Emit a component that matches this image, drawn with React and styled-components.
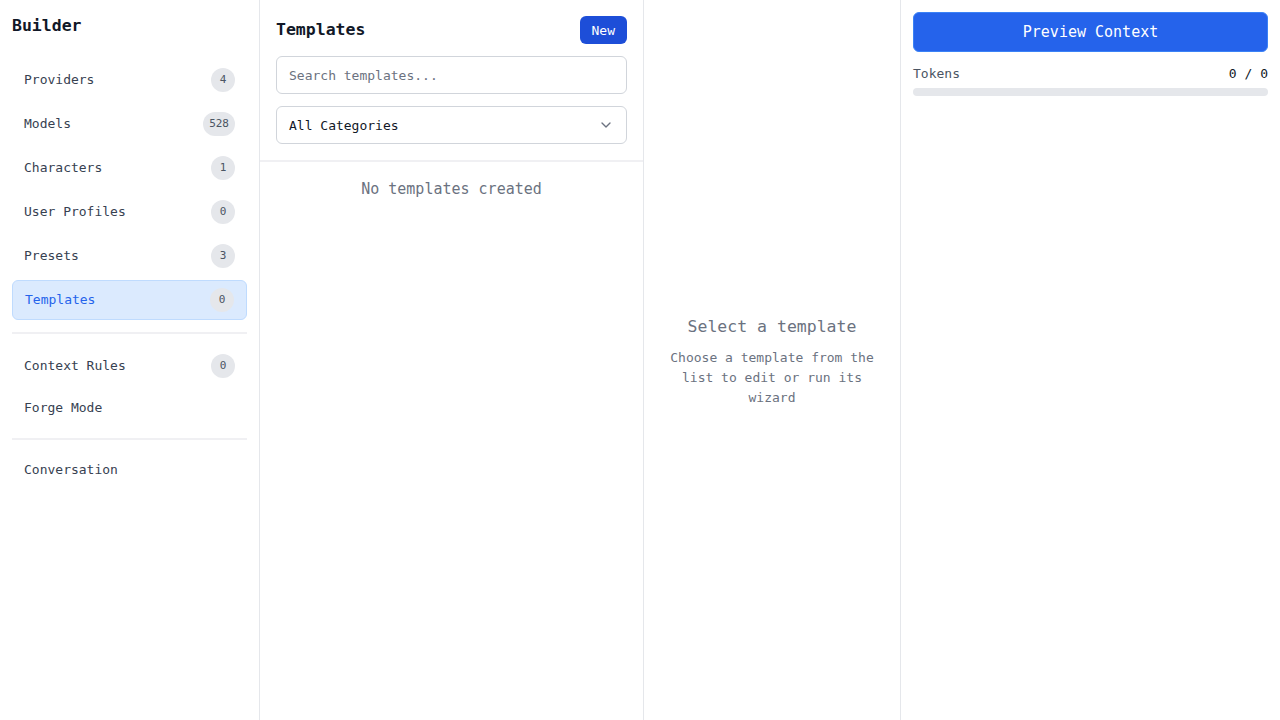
import React from "react";
import styled, { createGlobalStyle } from "styled-components";
import { ChevronDown } from "lucide-react";

const Global = createGlobalStyle`
  html, body { margin: 0; padding: 0; background: #fff; }
  body { font-family: "DejaVu Sans Mono", "Liberation Mono", monospace; color: #111827; }
  * { box-sizing: border-box; }
`;

const Layout = styled.div`
  display: flex;
  width: 1280px;
  height: 720px;
  overflow: hidden;
`;

const Sidebar = styled.aside`
  width: 260px;
  flex-shrink: 0;
  border-right: 1px solid #e5e7eb;
  padding: 12px;
  display: flex;
  flex-direction: column;
`;

const Brand = styled.h1`
  margin: 0 0 22px 0;
  padding-top: 2px;
  font-size: 16.5px;
  line-height: 24px;
  font-weight: 700;
  color: #111827;
`;

const NavList = styled.nav`
  display: flex;
  flex-direction: column;
  gap: 4px;
`;

const NavItem = styled.div`
  display: flex;
  align-items: center;
  justify-content: space-between;
  padding: 7px ${(p) => (p.$active ? "12px" : "11px")};
  border-radius: 6px;
  font-size: 13px;
  line-height: 20px;
  color: ${(p) => (p.$active ? "#2563eb" : "#374151")};
  background: ${(p) => (p.$active ? "#dbeafe" : "transparent")};
  border: 1px solid ${(p) => (p.$active ? "#bfdbfe" : "transparent")};
`;

const Badge = styled.span`
  min-width: 24px;
  height: 24px;
  padding: 0 6px;
  border-radius: 12px;
  background: #e5e7eb;
  color: #4b5563;
  font-size: 11px;
  display: inline-flex;
  align-items: center;
  justify-content: center;
`;

const Divider = styled.div`
  height: 2px;
  background: #f0f0f3;
  margin: 12px 0;
`;

const ListPanel = styled.section`
  width: 384px;
  flex-shrink: 0;
  border-right: 1px solid #e5e7eb;
  display: flex;
  flex-direction: column;
`;

const ListHeader = styled.div`
  padding: 16px;
  border-bottom: 2px solid #f0f0f3;
  display: flex;
  flex-direction: column;
  gap: 12px;
`;

const HeaderRow = styled.div`
  display: flex;
  align-items: center;
  justify-content: space-between;
  height: 28px;
`;

const PanelTitle = styled.h2`
  margin: 0 0 2px 0;
  font-size: 16.5px;
  font-weight: 700;
  color: #111827;
`;

const SmallButton = styled.button`
  height: 28px;
  padding: 0 12px;
  border: none;
  border-radius: 6px;
  background: #1d4ed8;
  color: #fff;
  font-family: inherit;
  font-size: 13px;
`;

const SearchInput = styled.input`
  height: 38px;
  width: 100%;
  border: 1px solid #d1d5db;
  border-radius: 6px;
  padding: 0 12px;
  font-family: inherit;
  font-size: 13px;
  color: #111827;
  outline: none;
  &::placeholder { color: #6b7280; }
`;

const SelectBox = styled.div`
  height: 38px;
  border: 1px solid #d1d5db;
  border-radius: 6px;
  padding: 0 12px;
  display: flex;
  align-items: center;
  justify-content: space-between;
  font-size: 13px;
  color: #111827;
`;

const EmptyList = styled.div`
  padding: 16px;
  text-align: center;
  font-size: 15px;
  line-height: 22px;
  color: #6b7280;
`;

const DetailPanel = styled.section`
  width: 257px;
  flex-shrink: 0;
  border-right: 1px solid #e5e7eb;
  display: flex;
  flex-direction: column;
  align-items: center;
  justify-content: center;
  padding: 27px 24px 24px;
  text-align: center;
`;

const DetailTitle = styled.div`
  font-size: 16.5px;
  line-height: 22px;
  color: #6b7280;
  margin-bottom: 10px;
`;

const DetailText = styled.p`
  margin: 0;
  font-size: 13px;
  line-height: 20px;
  color: #6b7280;
`;

const ContextPanel = styled.section`
  flex: 1;
  padding: 12px;
  display: flex;
  flex-direction: column;
`;

const PrimaryButton = styled.button`
  height: 40px;
  width: 100%;
  border: 1px solid #3b82f6;
  border-radius: 6px;
  background: #2563eb;
  color: #fff;
  font-family: inherit;
  font-size: 15px;
`;

const TokenRow = styled.div`
  display: flex;
  justify-content: space-between;
  align-items: center;
  margin-top: 12px;
  font-size: 13px;
  line-height: 20px;
`;

const TokenLabel = styled.span`
  color: #4b5563;
`;

const TokenValue = styled.span`
  color: #111827;
`;

const Track = styled.div`
  height: 8px;
  border-radius: 4px;
  background: #e5e7eb;
  margin-top: 4px;
  overflow: hidden;
`;

const Fill = styled.div`
  height: 100%;
  background: #2563eb;
`;

const navTop = [
  { label: "Providers", count: 4 },
  { label: "Models", count: 528 },
  { label: "Characters", count: 1 },
  { label: "User Profiles", count: 0 },
  { label: "Presets", count: 3 },
  { label: "Templates", count: 0, active: true },
];

export default function App() {
  return (
    <>
      <Global />
      <Layout>
        <Sidebar>
          <Brand>Builder</Brand>
          <NavList>
            {navTop.map((n) => (
              <NavItem key={n.label} $active={n.active}>
                <span>{n.label}</span>
                <Badge>{n.count}</Badge>
              </NavItem>
            ))}
          </NavList>
          <Divider />
          <NavList>
            <NavItem>
              <span>Context Rules</span>
              <Badge>0</Badge>
            </NavItem>
            <NavItem>
              <span>Forge Mode</span>
            </NavItem>
          </NavList>
          <Divider />
          <NavList>
            <NavItem>
              <span>Conversation</span>
            </NavItem>
          </NavList>
        </Sidebar>

        <ListPanel>
          <ListHeader>
            <HeaderRow>
              <PanelTitle>Templates</PanelTitle>
              <SmallButton>New</SmallButton>
            </HeaderRow>
            <SearchInput placeholder="Search templates..." />
            <SelectBox>
              <span>All Categories</span>
              <ChevronDown size={16} color="#6b7280" />
            </SelectBox>
          </ListHeader>
          <EmptyList>No templates created</EmptyList>
        </ListPanel>

        <DetailPanel>
          <DetailTitle>Select a template</DetailTitle>
          <DetailText>Choose a template from the list to edit or run its wizard</DetailText>
        </DetailPanel>

        <ContextPanel>
          <PrimaryButton>Preview Context</PrimaryButton>
          <TokenRow>
            <TokenLabel>Tokens</TokenLabel>
            <TokenValue>0 / 0</TokenValue>
          </TokenRow>
          <Track>
            <Fill style={{ width: "0%" }} />
          </Track>
        </ContextPanel>
      </Layout>
    </>
  );
}
